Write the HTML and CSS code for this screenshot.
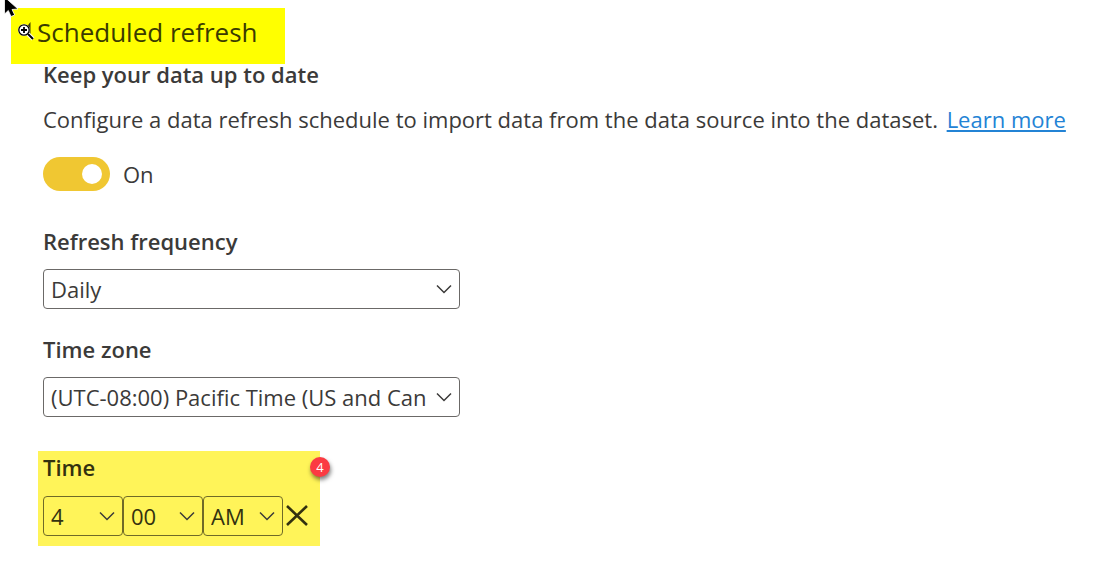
FILE: index.html
```
<!DOCTYPE html>
<html lang="en">
<head>
    <meta charset="UTF-8">
    <meta name="viewport" content="width=device-width, initial-scale=1.0">
    <title>Scheduled refresh</title>
    <link rel="stylesheet" href="styles.css">
</head>
<body>

<svg class="pointer" width="20" height="20" viewBox="0 0 20 20" aria-hidden="true">
    <path d="M4.500 -3 V14 L8.300 10.500 L11 16.500 L14.700 15 L12 9.500 L18 9 Z" fill="#000" stroke="#fff" stroke-width="0.800"/>
</svg>

<header class="title-bar">
    <svg class="zoom-icon" width="18" height="20" viewBox="0 0 18 20" aria-hidden="true">
        <path d="M13.500 0 L8 7 L13.500 13 Z" fill="#3b3b00"/>
        <path d="M11 12 L16 17" stroke="#fff" stroke-width="4"/>
        <circle cx="7" cy="8" r="6" fill="#fff"/>
        <circle cx="7" cy="8" r="5.200" fill="#fff" stroke="#000" stroke-width="1.300"/>
        <path d="M4 8 H10 M7 5 V11" stroke="#000" stroke-width="1.800"/>
        <path d="M11 12 L16 17" stroke="#000" stroke-width="2"/>
    </svg>
    <h1>Scheduled refresh</h1>
</header>

<main>
    <h2>Keep your data up to date</h2>
    <p class="intro">Configure a data refresh schedule to import data from the data source into the dataset. <a href="#">Learn more</a></p>

    <form>
        <label class="toggle">
            <input type="checkbox" name="enabled" checked>
            <span>On</span>
        </label>

        <div class="field">
            <label for="frequency">Refresh frequency</label>
            <select id="frequency" name="frequency">
                <option>Daily</option>
                <option>Weekly</option>
            </select>
        </div>

        <div class="field">
            <label for="timezone">Time zone</label>
            <select id="timezone" name="timezone">
                <option>(UTC-08:00) Pacific Time (US and Canada)</option>
                <option>(UTC) Coordinated Universal Time</option>
            </select>
        </div>

        <fieldset class="time">
            <legend>Time</legend>
            <div class="time-row">
                <select name="hour" aria-label="Hour">
                    <option>4</option>
                    <option>5</option>
                </select>
                <select name="minute" aria-label="Minute">
                    <option>00</option>
                    <option>30</option>
                </select>
                <select name="period" aria-label="AM or PM">
                    <option>AM</option>
                    <option>PM</option>
                </select>
                <button type="button" class="remove" aria-label="Remove time">
                    <svg width="22" height="22" viewBox="0 0 22 22" aria-hidden="true">
                        <path d="M1 1 L21 20 M21 1 L1 20" stroke="#33310f" stroke-width="2.600" fill="none"/>
                    </svg>
                </button>
            </div>
            <span class="badge">4</span>
        </fieldset>
    </form>
</main>

</body>
</html>
```
FILE: styles.css
```
body {
    font-family: "Open Sans", "Noto Sans", sans-serif;
    font-size: 22px;
    color: #3b3a39;
    background-color: #fff;
    margin: 0;
    padding: 8px 11px;
}
.pointer {
    position: absolute;
    top: 0;
    left: 0;
}
.title-bar {
    display: flex;
    align-items: center;
    gap: 2px;
    width: fit-content;
    height: 56px;
    box-sizing: border-box;
    padding: 0 28px 8px 6px;
    background-color: #ffff00;
}
h1 {
    margin: 0;
    font-size: 26px;
    font-weight: 400;
    color: #3b3b00;
}
main {
    padding-left: 32px;
}
h2 {
    margin: 0 0 18px;
    font-size: 22px;
    line-height: 21px;
    font-weight: 600;
}
.intro {
    margin: 0 0 22px;
    line-height: 32px;
}
a {
    margin-left: 3px;
    color: #2383d5;
    text-decoration-thickness: 2px;
    text-underline-offset: 2px;
}
.toggle {
    display: flex;
    align-items: center;
    gap: 13px;
    width: fit-content;
    height: 34px;
    margin-bottom: 36px;
}
.toggle input {
    appearance: none;
    display: flex;
    align-items: center;
    justify-content: flex-end;
    width: 67px;
    height: 34px;
    box-sizing: border-box;
    margin: 0;
    padding: 0 8px;
    border-radius: 17px;
    background-color: #f0c732;
}
.toggle input::before {
    content: "";
    width: 20px;
    height: 20px;
    border-radius: 50%;
    background-color: #fff;
}
.toggle input:not(:checked) {
    justify-content: flex-start;
    background-color: #8a8886;
}
.field {
    display: flex;
    flex-direction: column;
    gap: 14px;
    max-width: 417px;
    margin-bottom: 26px;
}
.field label, legend {
    font-weight: 600;
    line-height: 28px;
}
select {
    appearance: none;
    box-sizing: border-box;
    width: 100%;
    height: 40px;
    padding: 0 32px 0 7px;
    border: 1px solid #6b6967;
    border-radius: 4px;
    font: inherit;
    color: inherit;
    background: transparent url("data:image/svg+xml,%3Csvg xmlns='http://www.w3.org/2000/svg' width='16' height='10' viewBox='0 0 16 10'%3E%3Cpath d='M1 1.500 L8 8.500 L15 1.500' fill='none' stroke='%233b3a39' stroke-width='1.500'/%3E%3C/svg%3E") no-repeat right 7px center;
}
.time {
    position: relative;
    width: fit-content;
    margin: 34px 0 0 -5px;
    padding: 2px 12px 10px 5px;
    border: 0;
    color: #33310f;
    background-color: #fff459;
}
legend {
    float: left;
    padding: 0;
}
.time-row {
    clear: both;
    display: flex;
    align-items: center;
    padding-top: 15px;
}
.time-row select {
    width: 80px;
    border-color: #6f6a27;
}
.remove {
    display: flex;
    margin-left: 3px;
    padding: 0;
    border: 0;
    background: none;
}
.badge {
    position: absolute;
    top: 6px;
    right: -10px;
    width: 20px;
    height: 20px;
    border-radius: 50%;
    font-size: 13px;
    line-height: 20px;
    text-align: center;
    color: #fff;
    background-color: #fb3b42;
    box-shadow: 1px 3px 4px rgba(0, 0, 0, 0.5);
}
```
